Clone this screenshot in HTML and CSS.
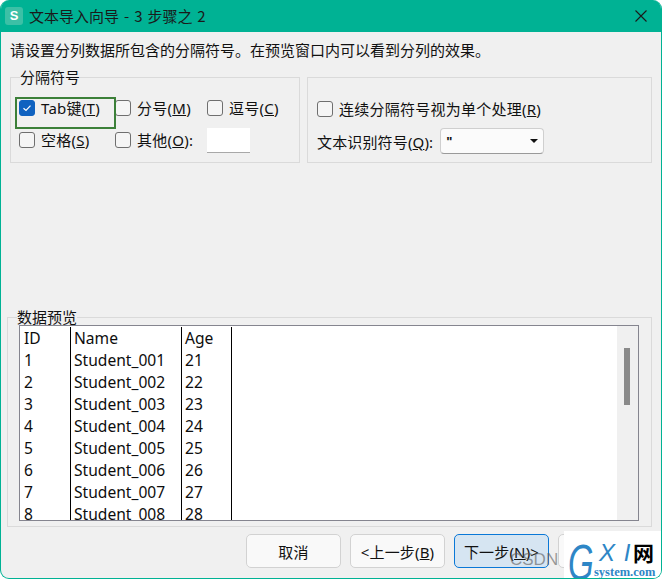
FILE: index.html
```html
<!DOCTYPE html>
<html lang="zh-CN">
<head>
<meta charset="utf-8">
<title>文本导入向导</title>
<link rel="stylesheet" href="styles.css">
</head>
<body>
<div class="window">
  <header class="titlebar">
    <span class="app-icon">S</span>
    <span class="title">文本导入向导 - 3 步骤之 2</span>
    <svg class="close" width="12" height="12" viewBox="0 0 12 12"><path d="M0.5 0.5L11.5 11.5M11.5 0.5L0.5 11.5" stroke="#1a1a1a" stroke-width="1.1" fill="none"/></svg>
  </header>
  <main class="content">
    <p class="intro">请设置分列数据所包含的分隔符号。在预览窗口内可以看到分列的效果。</p>
    <div class="options">
      <fieldset class="group group-sep">
        <legend>分隔符号</legend>
        <div class="sep-grid">
          <label class="check"><span class="box checked"><svg width="10" height="8" viewBox="0 0 10 8"><path d="M1.5 4.2L4 6.4L8.5 1.6" stroke="#fff" stroke-width="1.2" fill="none"/></svg></span>Tab键(<u>T</u>)</label>
          <label class="check"><span class="box"></span>分号(<u>M</u>)</label>
          <label class="check"><span class="box"></span>逗号(<u>C</u>)</label>
          <label class="check"><span class="box"></span>空格(<u>S</u>)</label>
          <label class="check"><span class="box"></span>其他(<u>O</u>):</label>
          <span class="other-input"></span>
        </div>
        <span class="highlight"></span>
      </fieldset>
      <div class="group group-opts">
        <label class="check"><span class="box"></span>连续分隔符号视为单个处理(<u>R</u>)</label>
        <div class="qualifier">
          <span>文本识别符号(<u>Q</u>):</span>
          <span class="select"><span>"</span><i class="caret"></i></span>
        </div>
      </div>
    </div>
    <fieldset class="group preview-group">
      <legend>数据预览</legend>
      <div class="preview">
        <div class="rows">
          <div class="row"><span>ID</span><span>Name</span><span>Age</span></div>
          <div class="row"><span>1</span><span>Student_001</span><span>21</span></div>
          <div class="row"><span>2</span><span>Student_002</span><span>22</span></div>
          <div class="row"><span>3</span><span>Student_003</span><span>23</span></div>
          <div class="row"><span>4</span><span>Student_004</span><span>24</span></div>
          <div class="row"><span>5</span><span>Student_005</span><span>25</span></div>
          <div class="row"><span>6</span><span>Student_006</span><span>26</span></div>
          <div class="row"><span>7</span><span>Student_007</span><span>27</span></div>
          <div class="row"><span>8</span><span>Student_008</span><span>28</span></div>
        </div>
        <div class="scrollbar"><span class="thumb"></span></div>
      </div>
    </fieldset>
    <footer class="buttons">
      <button class="btn">取消</button>
      <button class="btn">&lt;上一步(<u>B</u>)</button>
      <button class="btn primary">下一步(<u>N</u>)&gt;</button>
      <button class="btn"></button>
    </footer>
  </main>
  <span class="csdn">CSDN</span>
  <div class="logo">
    <span class="logo-g">G</span>
    <span class="logo-xi">X I</span>
    <span class="logo-cn">网</span>
    <span class="logo-site">system.com</span>
  </div>
</div>
</body>
</html>
```

FILE: styles.css
```css
* { box-sizing: border-box; }
html, body { margin: 0; height: 100%; background: #fff; }
body {
  font-family: "Noto Sans", "Noto Sans CJK SC", sans-serif;
  font-size: 15px;
  color: #111;
  overflow: hidden;
}
.window {
  position: relative;
  width: 662px;
  height: 579px;
  background: #f0f0f0;
  border: 1px solid #00b294;
  border-top: 0;
  border-radius: 9px;
  overflow: hidden;
  display: flex;
  flex-direction: column;
}
.titlebar {
  height: 32px;
  flex: none;
  background: #00b294;
  display: flex;
  align-items: center;
  padding: 0 15px 0 4px;
  margin: 0 -1px;
}
.app-icon {
  width: 18px;
  height: 18px;
  margin-left: 1px;
  border-radius: 3px;
  background: #3cc0a6;
  color: #fff;
  font: 700 13px/18px "Liberation Sans", sans-serif;
  text-align: center;
}
.title {
  margin-left: 6px;
  font-family: "Noto Sans CJK SC", sans-serif;
  font-size: 15px;
  line-height: 32px;
  word-spacing: 1.6px;
  color: #1a1a1a;
}
.close { margin-left: auto; }
.content {
  flex: 1;
  display: flex;
  flex-direction: column;
  padding: 0 9px 0 6px;
  min-height: 0;
}
.intro {
  margin: 0 0 0 3px;
  height: 45px;
  line-height: 35px;
  font-family: "Noto Sans CJK SC", sans-serif;
  white-space: nowrap;
}
.options {
  display: flex;
  gap: 7px;
  height: 86px;
  flex: none;
  margin-left: 3px;
}
.group {
  position: relative;
  margin: 0;
  border: 1px solid #dadada;
  min-width: 0;
}
.group legend {
  padding: 0;
  font-family: "Noto Sans CJK SC", sans-serif;
}
.group-sep {
  width: 290px;
  height: 86px;
  padding: 0 0 0 8px;
}
.group-sep legend { margin-left: 1px; height: 1px; line-height: 0; }
.sep-grid {
  display: grid;
  grid-template-columns: 96px 92px auto;
  grid-template-rows: 33px 32px;
  margin-top: 13px;
  align-items: center;
}
.check {
  display: flex;
  align-items: center;
  white-space: nowrap;
  letter-spacing: 0.25px;
  line-height: 20px;
}
.box {
  width: 16px;
  height: 16px;
  flex: none;
  margin-right: 6px;
  border: 1px solid #6f6f6f;
  border-radius: 3px;
  background: #f5f5f5;
  display: flex;
  align-items: center;
  justify-content: center;
}
.box.checked { background: #0f62c0; border-color: #0f62c0; }
.other-input {
  display: block;
  width: 43px;
  height: 25px;
  background: #fff;
  border-bottom: 1px solid #a8a8a8;
}
.highlight {
  position: absolute;
  left: 4px;
  top: 19px;
  width: 101px;
  height: 32px;
  border: 2px solid #3c8039;
  pointer-events: none;
}
.group-opts {
  flex: 1;
  padding: 21px 9px 0;
}
.qualifier {
  display: flex;
  align-items: center;
  gap: 7px;
  margin-top: 9px;
  letter-spacing: 0.15px;
}
.select {
  width: 104px;
  height: 26px;
  background: #fbfbfb;
  border: 1px solid #cfcfcf;
  border-bottom-color: #9a9a9a;
  border-radius: 4px;
  display: flex;
  align-items: center;
  justify-content: space-between;
  padding: 0 5px;
  font: 700 13px/1 "Liberation Sans", sans-serif;
}
.caret {
  border-left: 4px solid transparent;
  border-right: 4px solid transparent;
  border-top: 4px solid #111;
}
.preview-group {
  width: 645px;
  height: 210px;
  flex: none;
  margin-top: 154px;
  padding: 0 12px 0 11px;
}
.preview-group legend {
  margin-left: -2px;
  height: 1px;
  line-height: 0;
}
.preview {
  height: 196px;
  margin-top: 7px;
  background: #fff;
  border: 1px solid #85858f;
  display: flex;
  overflow: hidden;
}
.rows {
  flex: 1;
  padding-top: 1px;
  overflow: hidden;
}
.row {
  display: grid;
  grid-template-columns: 51px 111px 50px;
  height: 22px;
  font-size: 15.6px;
  line-height: 22px;
  color: #0d0d0d;
}
.row span {
  border-right: 1px solid #000;
  padding-left: 3px;
  white-space: nowrap;
  overflow: hidden;
}
.row span:first-child { padding-left: 4px; }
.scrollbar {
  width: 21px;
  flex: none;
  background: #f0f0f0;
  padding: 22px 0 0 7px;
}
.thumb {
  display: block;
  width: 6px;
  height: 57px;
  background: #8a8a8a;
}
.buttons {
  display: flex;
  gap: 9px;
  margin-top: 7px;
  padding-left: 239px;
  height: 34px;
  flex: none;
}
.btn {
  width: 95px;
  height: 34px;
  flex: none;
  background: #f9f9f9;
  border: 1px solid #d2d2d2;
  border-radius: 5px;
  font-family: "Noto Sans", "Noto Sans CJK SC", sans-serif;
  font-size: 15px;
  letter-spacing: 0.15px;
  color: #111;
  padding: 0;
}
.btn.primary {
  background: #d6e5f2;
  border-color: #0a78d7;
}
.csdn {
  position: absolute;
  left: 509px;
  top: 549px;
  font: 17px/22px "Liberation Sans", sans-serif;
  color: rgba(90, 90, 90, 0.6);
}
.logo {
  position: absolute;
  left: 563px;
  top: 531px;
  width: 98px;
  height: 47px;
  background: #fff;
  overflow: hidden;
}
.logo-g {
  position: absolute;
  left: 4px;
  top: 5px;
  font: italic 400 50px/54px "Liberation Sans", sans-serif;
  color: #2e86c6;
  transform: scaleX(0.66);
  transform-origin: left top;
}
.logo-xi {
  position: absolute;
  left: 35px;
  top: 9px;
  font: italic 400 24px/26px "Liberation Sans", sans-serif;
  letter-spacing: 1px;
  color: #2e86c6;
  white-space: pre;
}
.logo-cn {
  position: absolute;
  left: 69px;
  top: 8px;
  font: 700 21px/26px "Noto Sans CJK SC", sans-serif;
  color: #000;
}
.logo-site {
  position: absolute;
  left: 30px;
  top: 34px;
  font: 700 12.5px/14px "Liberation Serif", serif;
  color: #2e86c6;
  white-space: nowrap;
}
```
